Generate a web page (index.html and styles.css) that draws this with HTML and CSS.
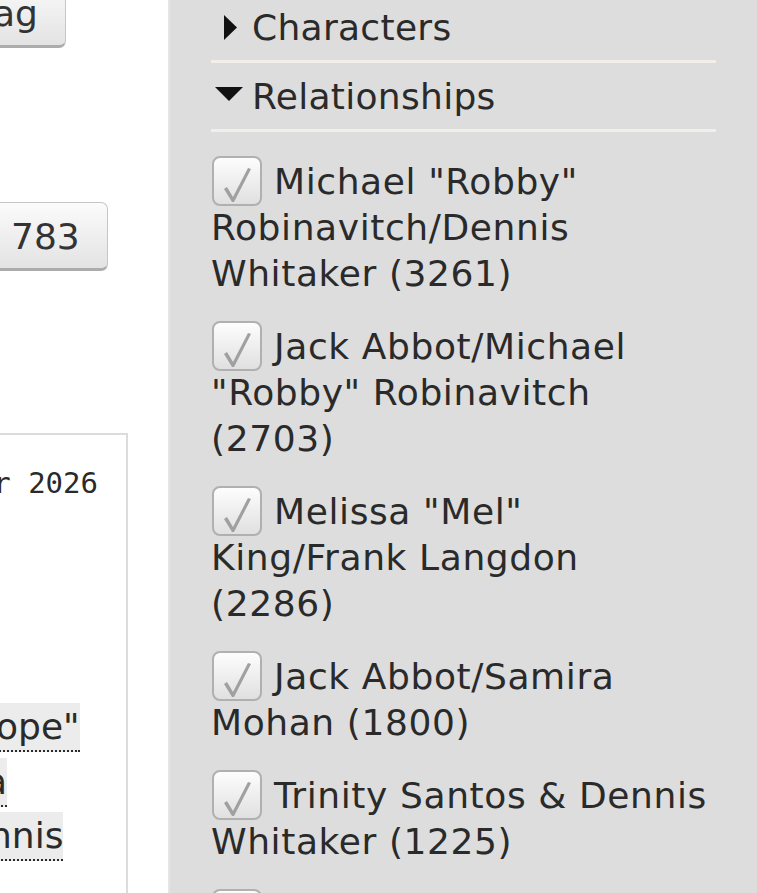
FILE: index.html
```html
<!DOCTYPE html>
<html lang="en">
<head>
<meta charset="utf-8">
<title>Filters</title>
<link rel="stylesheet" href="styles.css">
</head>
<body>
<div class="page">
  <main class="main">
    <div class="actions actions-tag"><button class="btn btn-tag">ag</button></div>
    <div class="actions actions-count"><button class="btn btn-count">783</button></div>
    <div class="blurb">
      <p class="datetime">r 2026</p>
      <ul class="tags">
        <li><a class="tag tag-1" href="#">ope"</a></li>
        <li><a class="tag tag-2" href="#">a</a></li>
        <li><a class="tag tag-3" href="#">nnis</a></li>
      </ul>
    </div>
  </main>
  <aside class="filters">
    <div class="filter-group">
      <h3 class="filter-heading"><span class="expander"><svg width="41" height="46" viewBox="0 0 41 46"><polygon points="13,10 26,22.5 13,35" fill="#111"/></svg></span>Characters</h3>
    </div>
    <div class="filter-group group-open">
      <h3 class="filter-heading"><span class="expander"><svg width="41" height="46" viewBox="0 0 41 46"><polygon points="4,13 32,13 18,27" fill="#111"/></svg></span>Relationships</h3>
      <ul class="options">
        <li><label><span class="check"><svg width="46" height="46" viewBox="0 0 46 46"><path d="M10 31 L13 29 L19 39 L34 10 L37 11 L20 44 L18 44 Z" fill="#a0a0a0"/></svg></span> Michael "Robby" Robinavitch/Dennis Whitaker (3261)</label></li>
        <li><label><span class="check"><svg width="46" height="46" viewBox="0 0 46 46"><path d="M10 31 L13 29 L19 39 L34 10 L37 11 L20 44 L18 44 Z" fill="#a0a0a0"/></svg></span> Jack Abbot/Michael "Robby" Robinavitch (2703)</label></li>
        <li><label><span class="check"><svg width="46" height="46" viewBox="0 0 46 46"><path d="M10 31 L13 29 L19 39 L34 10 L37 11 L20 44 L18 44 Z" fill="#a0a0a0"/></svg></span> Melissa "Mel" King/Frank Langdon (2286)</label></li>
        <li><label><span class="check"><svg width="46" height="46" viewBox="0 0 46 46"><path d="M10 31 L13 29 L19 39 L34 10 L37 11 L20 44 L18 44 Z" fill="#a0a0a0"/></svg></span> Jack Abbot/Samira Mohan (1800)</label></li>
        <li><label><span class="check"><svg width="46" height="46" viewBox="0 0 46 46"><path d="M10 31 L13 29 L19 39 L34 10 L37 11 L20 44 L18 44 Z" fill="#a0a0a0"/></svg></span> Trinity Santos &amp; Dennis Whitaker (1225)</label></li>
        <li><label><span class="check"><svg width="46" height="46" viewBox="0 0 46 46"><path d="M10 31 L13 29 L19 39 L34 10 L37 11 L20 44 L18 44 Z" fill="#a0a0a0"/></svg></span> Frank Langdon/Dennis Whitaker (1104)</label></li>
      </ul>
    </div>
  </aside>
</div>
</body>
</html>
```

FILE: styles.css
```css
* { box-sizing: border-box; }

html, body {
  margin: 0;
  padding: 0;
}

body {
  background: #fff;
  color: #2a2a2a;
  font-family: "DejaVu Sans", Verdana, sans-serif;
  font-size: 36px;
  line-height: 46px;
  height: 893px;
  overflow: hidden;
}

.page {
  display: flex;
  height: 893px;
}

/* left, cut-off main column */
.main {
  width: 168px;
  flex: none;
  overflow: hidden;
}

.actions { margin: 0; }
.actions-tag { margin-top: -21px; }
.actions-count { margin-top: 154px; }

.btn {
  display: inline-block;
  font: inherit;
  color: #333;
  line-height: 46px;
  padding: 11px 27px 8px;
  border: 1px solid #c6c6c6;
  border-bottom: 3px solid #acacac;
  border-radius: 7px;
  background: linear-gradient(#fbfbfb, #e3e3e3);
}

.btn-tag { margin-left: -35px; }
.btn-count { margin-left: -17px; }

.blurb {
  margin-top: 162px;
  margin-left: -20px;
  width: 148px;
  min-height: 480px;
  border: 2px solid #dcdcdc;
  padding: 33px 28px 0 18px;
}

.datetime {
  margin: 0 0 202px -40px;
  font-family: "DejaVu Sans Mono", monospace;
  font-size: 29px;
  line-height: 30px;
  text-align: right;
  white-space: nowrap;
}

.tags {
  list-style: none;
  margin: 0;
  padding: 0;
}

.tags li {
  line-height: 54.5px;
  white-space: nowrap;
}

.tag {
  color: #2a2a2a;
  text-decoration: none;
  background: #ececec;
  border-bottom: 2px dotted #2a2a2a;
  padding: 3px 0;
}

.tag-1 { margin-left: -4px; }
.tag-2 { margin-left: -15px; }
.tag-3 { margin-left: -11px; }

/* right filter sidebar */
.filters {
  flex: 1;
  background: #ddd;
  border-left: 2px solid #e5e5e5;
  padding: 5px 41px 0 41px;
}

.filter-group + .filter-group { margin-top: 11px; }

.filter-heading {
  margin: 0;
  font-size: 36px;
  font-weight: normal;
  line-height: 46px;
  letter-spacing: 0.3px;
  padding-bottom: 9px;
  border-bottom: 3px solid #f2eee9;
  white-space: nowrap;
}

.expander {
  display: inline-block;
  width: 41px;
  height: 46px;
  vertical-align: top;
}

.expander svg { display: block; }

.options {
  list-style: none;
  margin: 27px 0 0;
  padding: 0;
  width: 498px;
  letter-spacing: 0.6px;
}

.options li {
  margin: 0 0 27px;
  line-height: 46px;
}

.check {
  display: inline-block;
  width: 50px;
  height: 50px;
  margin: -4px 0 -4px 1px;
  border: 2px solid #b0b0b0;
  border-radius: 8px;
  background: linear-gradient(#fdfdfd, #e0e0e0);
  overflow: hidden;
  vertical-align: -8px;
}

.check svg { display: block; }
```
